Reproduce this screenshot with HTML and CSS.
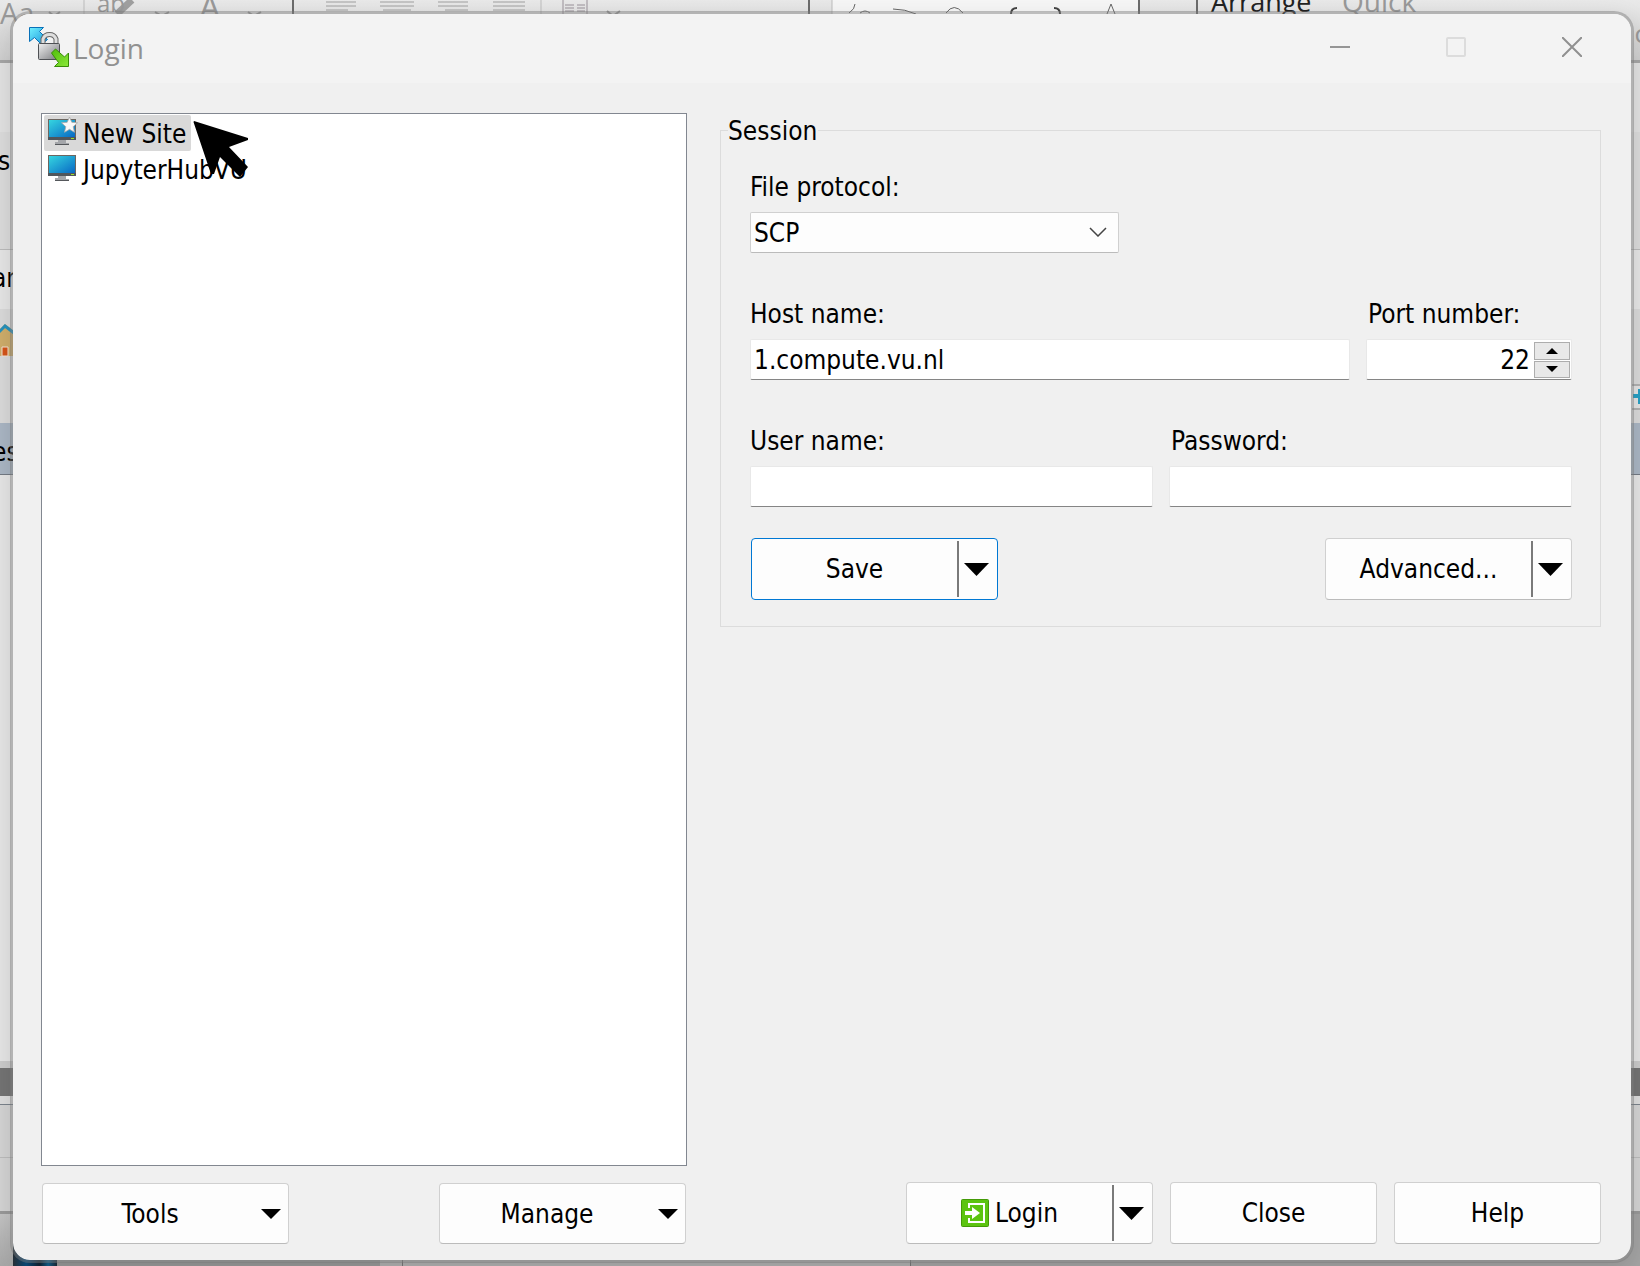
FILE: index.html
```html
<!DOCTYPE html>
<html lang="en">
<head>
<meta charset="utf-8">
<title>Login</title>
<link rel="stylesheet" href="styles.css">
</head>
<body>
<svg class="defs" width="0" height="0" aria-hidden="true">
  <defs>
    <linearGradient id="screen" x1="0" y1="0" x2="1" y2="1">
      <stop offset="0" stop-color="#35d5e0"/><stop offset="1" stop-color="#0868c4"/>
    </linearGradient>
    <linearGradient id="metal" x1="0" y1="0" x2="1" y2="1">
      <stop offset="0" stop-color="#f0f0f0"/><stop offset="1" stop-color="#77787c"/>
    </linearGradient>
    <linearGradient id="sky" x1="0" y1="0" x2="1" y2="1">
      <stop offset="0" stop-color="#6ff0ff"/><stop offset="1" stop-color="#1892d8"/>
    </linearGradient>
    <linearGradient id="leaf" x1="0" y1="0" x2="1" y2="1">
      <stop offset="0" stop-color="#4fbd0a"/><stop offset="1" stop-color="#8be83a"/>
    </linearGradient>
    <symbol id="monitor" viewBox="0 0 28 28">
      <path d="M10 22h8v3h3v2H7v-3h3z" fill="#a4a6aa"/>
      <path d="M7 26h14v1H7z" fill="#55585c"/>
      <path d="M0 1h28v21H0z" fill="#6c6660"/>
      <path d="M1 2h26v17H1z" fill="url(#screen)"/>
      <path d="M0 19h28v3H0z" fill="#50565c"/>
      <path d="M23 20h3v1h-3z" fill="#9be02c"/>
    </symbol>
  </defs>
</svg>

<div class="desktop">
  <div class="backdrop" aria-hidden="true">
    <div class="band ribbon">
      <svg width="1640" height="60" viewBox="0 0 1640 60">
        <path d="M832 0h306v20H832z" fill="#f6f6f6"/>
        <g fill="none" stroke="#8a8a8a">
          <path d="M84 0v20M541 0v20M832 0v20" stroke="#bdbdbd"/>
          <path d="M293 0v20M809 0v20M1139 0v20M1197 0v20" stroke="#6c6c6c" stroke-width="2"/>
          <path d="M326 2h30M326 10h22M326 6h30M380 2h34M383 10h28M380 6h34M438 2h30M445 10h23M438 6h30M493 2h32M493 6h32M493 10h32" stroke="#a0a0a0"/>
          <path d="M563 0v20M587 0v20M565 5h9M577 5h8M565 8h9M577 8h8M565 11h9M577 11h8" stroke="#9a929a"/>
          <path d="M49 12l5 4 6-4M155 12l7 4 7-4M248 12l6 4 7-4M607 11l6 5 7-5" stroke="#999" stroke-width="2"/>
          <path d="M117 14l15-14" stroke="#a0a0a0" stroke-width="7"/>
          <path d="M855 4q0 5-6 9M860 13q5-4 10 0M893 9q12 0 23 5M946 13q8-11 17 0M1107 14l4-10 4 10" stroke="#666"/>
          <path d="M1017 8q-6 0-6 6M1054 8q6 0 6 6" stroke="#444" stroke-width="2"/>
        </g>
        <g class="ribbon-text">
          <text x="0" y="24" font-size="29">Aa</text>
          <text x="97" y="12" font-size="24">ab</text>
          <text x="199" y="20" font-size="34">A</text>
          <text class="dark" x="1211" y="12" font-size="27">Arrange</text>
          <text x="1342" y="12" font-size="28">Quick</text>
        </g>
      </svg>
      <span class="edge-letter">c</span>
    </div>
    <div class="band ribbon-rule"></div>
    <div class="band b-light"></div>
    <div class="band b-tools"><span class="cut cut-s">s</span></div>
    <div class="band b-path"><span class="cut">ar</span></div>
    <div class="band b-icons">
      <svg width="14" height="46" viewBox="0 0 14 46">
        <path d="M0 18l5-5 9 7v25H0z" fill="#cfae6b"/>
        <path d="M-2 22L5 15l9 7" fill="none" stroke="#2792bd" stroke-width="3"/>
        <path d="M2 36h6v9H2z" fill="#d65418" stroke="#f4e4d4"/>
      </svg>
    </div>
    <div class="band b-row"><svg width="8" height="26" viewBox="0 0 8 26"><path d="M0 1h8M0 25h8" stroke="#888"/><path d="M0 2h8v22H0z" fill="#e4e4e4"/><path d="M1 12h7" stroke="#28a0c4" stroke-width="4"/><path d="M7 5v15" stroke="#28a0c4" stroke-width="2"/></svg></div>
    <div class="band b-selected"><span class="cut">es</span></div>
    <div class="band b-pane"></div>
    <div class="band b-trim"></div>
    <div class="band b-dark"></div>
    <div class="band b-gap"></div>
    <div class="band b-status"></div>
    <div class="band b-status"></div>
    <div class="band b-desk">
      <div class="thumb"></div><div class="strip"></div><div class="strip-light"></div><div class="strip-wide"></div><div class="strip-end"></div>
    </div>
  </div>

  <main class="window">
    <header class="titlebar">
      <svg class="app-icon" viewBox="0 0 40 40" aria-hidden="true">
        <path d="M.5 .5h14l-4 4 8 8-6 5-7-7-5 4z" fill="url(#sky)" stroke="#0870b8"/>
        <path d="M14 18v-6a7 7 0 0 1 13 0v6" fill="none" stroke="#686868" stroke-width="5"/>
        <path d="M14 18v-6a7 7 0 0 1 13 0v6" fill="none" stroke="#dedede" stroke-width="3"/>
        <rect x="9.500" y="16.500" width="21" height="16" rx="1" fill="url(#metal)" stroke="#4e5054"/>
        <path d="M22.500 26l4-4 9 8 4-4v13.500h-14l4-4z" fill="url(#leaf)" stroke="#388c08"/>
      </svg>
      <h1 class="title">Login</h1>
      <div class="controls">
        <button class="control" type="button" aria-label="Minimize"><svg width="20" height="20" viewBox="0 0 20 20"><path d="M0 10h20" stroke="#959595" stroke-width="2"/></svg></button>
        <button class="control" type="button" aria-label="Maximize" disabled><svg width="20" height="20" viewBox="0 0 20 20"><rect x="1" y="1" width="18" height="18" rx="1" fill="none" stroke="#dcdcdc" stroke-width="2"/></svg></button>
        <button class="control" type="button" aria-label="Close window"><svg width="20" height="20" viewBox="0 0 20 20"><path d="M0 0l20 20M20 0L0 20" stroke="#909090" stroke-width="2"/></svg></button>
      </div>
    </header>

    <div class="content">
      <section class="column">
        <ul class="sites">
          <li class="site selected">
            <svg class="site-icon" viewBox="0 0 28 28" aria-hidden="true"><use href="#monitor"/><path d="M21.500-1l2.300 5.300 5.700.5-4.300 3.900 1.300 5.600-5-3-5 3 1.300-5.600-4.300-3.900 5.700-.5z" fill="#f8f8f8" stroke="#a8a8a8" stroke-width=".8"/></svg>
            <span>New Site</span>
          </li>
          <li class="site">
            <svg class="site-icon" viewBox="0 0 28 28" aria-hidden="true"><use href="#monitor"/></svg>
            <span>JupyterHubVU</span>
          </li>
        </ul>
        <div class="actions spread">
          <button class="button menu" type="button"><span class="caption">Tools</span><svg width="20" height="10" viewBox="0 0 20 10" aria-hidden="true"><path d="M0 0h20L10 10z"/></svg></button>
          <button class="button menu" type="button"><span class="caption">Manage</span><svg width="20" height="10" viewBox="0 0 20 10" aria-hidden="true"><path d="M0 0h20L10 10z"/></svg></button>
        </div>
      </section>

      <form class="column" onsubmit="return false">
        <fieldset class="session">
          <legend>Session</legend>
          <div class="rows">
            <div class="field protocol">
              <label for="protocol">File protocol:</label>
              <div class="select-box">
                <select id="protocol"><option>SCP</option></select>
                <svg class="chevron" width="18" height="10" viewBox="0 0 18 10" aria-hidden="true"><path d="M1 1l8 8 8-8" fill="none" stroke="#444" stroke-width="1.500"/></svg>
              </div>
            </div>
            <div class="pair">
              <div class="field grow">
                <label for="host">Host name:</label>
                <input id="host" class="box" type="text" value="1.compute.vu.nl">
              </div>
              <div class="field port">
                <label class="inset" for="port">Port number:</label>
                <div class="box spinner">
                  <input id="port" type="number" value="22">
                  <div class="steps">
                    <button class="step" type="button" aria-label="Increase"><svg width="12" height="6" viewBox="0 0 12 6"><path d="M0 6h12L6 0z"/></svg></button>
                    <button class="step" type="button" aria-label="Decrease"><svg width="12" height="6" viewBox="0 0 12 6"><path d="M0 0h12L6 6z"/></svg></button>
                  </div>
                </div>
              </div>
            </div>
            <div class="pair">
              <div class="field grow">
                <label for="user">User name:</label>
                <input id="user" class="box" type="text">
              </div>
              <div class="field grow">
                <label class="inset" for="password">Password:</label>
                <input id="password" class="box" type="password">
              </div>
            </div>
          </div>
          <div class="session-actions">
            <div class="button split primary">
              <button class="part" type="button">Save</button>
              <button class="part drop" type="button" aria-label="Save options"><svg width="25" height="13" viewBox="0 0 25 13"><path d="M0 0h25L12.500 13z"/></svg></button>
            </div>
            <div class="button split">
              <button class="part" type="button">Advanced...</button>
              <button class="part drop" type="button" aria-label="Advanced options"><svg width="25" height="13" viewBox="0 0 25 13"><path d="M0 0h25L12.500 13z"/></svg></button>
            </div>
          </div>
        </fieldset>
        <div class="actions end">
          <div class="button split">
            <button class="part" type="submit">
              <svg width="28" height="28" viewBox="0 0 28 28" aria-hidden="true"><rect x=".5" y=".5" width="27" height="27" rx="1" fill="#5cc410" stroke="#449a08"/><path d="M8 9V5h15v18H8v-4" fill="none" stroke="#fff" stroke-width="2"/><path d="M4 12h7V8l8 6-8 6v-4H4z" fill="#fff"/></svg>
              <span>Login</span>
            </button>
            <button class="part drop" type="button" aria-label="Login options"><svg width="25" height="13" viewBox="0 0 25 13"><path d="M0 0h25L12.500 13z"/></svg></button>
          </div>
          <button class="button plain" type="button">Close</button>
          <button class="button plain" type="button">Help</button>
        </div>
      </form>
    </div>
  </main>

  <svg class="pointer" width="57" height="60" viewBox="0 0 57 60" aria-hidden="true"><path d="M1 1L55 18v2L36 27l19 20-8 10-20-20-6 17h-3L.5 2z"/></svg>
</div>
</body>
</html>
```
FILE: styles.css
```css
* { box-sizing: border-box; }

body {
  margin: 0;
  font: 26px/32px "DejaVu Sans Condensed", "Noto Sans", sans-serif;
  color: #000;
}

button, input, select { font: inherit; color: inherit; margin: 0; }
svg { display: block; flex: none; }
.defs { position: absolute; }

/* Desktop and what shows behind the dialog */
.desktop {
  position: relative;
  display: flex;
  min-height: 100vh;
  padding: 11px 6px 3px 10px;
  overflow: hidden;
}

.backdrop {
  position: absolute;
  inset: 0;
  display: flex;
  flex-direction: column;
  background: #e6e6e6;
}

.band { flex: none; display: flex; justify-content: flex-start; overflow: hidden; }
.ribbon { position: relative; height: 60px; background: linear-gradient(#e9e9e9, #cfcfcf); }
.ribbon-text { font-family: "Open Sans", sans-serif; fill: #999; }
.ribbon-text .dark { fill: #222; }
.edge-letter { position: absolute; right: -7px; top: 17px; font-family: "Open Sans", sans-serif; color: #999; }
.ribbon-rule { height: 3px; background: #a6a6a6; }
.b-light { height: 69px; background: #e2e2e2; }
.b-tools { height: 118px; background: #dcdcdc; border-bottom: 1px solid #bbb; }
.b-path { height: 59px; padding-top: 12px; background: #e6e6e6; }
.b-icons { height: 63px; padding-top: 2px; background: #dadada; }
.b-row { height: 51px; padding-top: 12px; background: #dadada; justify-content: flex-end; }
.b-selected { height: 52px; padding-top: 13px; background: #aab6c4; border-bottom: 1px solid #737a84; }
.b-pane { flex: 1; background: #e6e6e6; }
.b-trim { height: 7px; background: #cbcbcb; }
.b-dark { height: 28px; background: #747474; }
.b-gap { height: 9px; background: #dedede; border-bottom: 1px solid #7b838c; }
.b-status { height: 53px; background: #d4d4d4; border-bottom: 1px solid #bcbcbc; }
.b-status + .b-status { height: 56px; border-bottom: 3px solid #999; }
.b-desk { height: 52px; padding-left: 13px; background: linear-gradient(#c4c4c4, #a8a8a8); }
.cut { width: 14px; margin-left: -6px; white-space: nowrap; }
.b-path .cut, .b-selected .cut { margin-left: -8px; }
.cut-s { margin-left: -2px; padding-top: 13px; }
.thumb { width: 44px; background: linear-gradient(90deg, #283038, #0b4c7c 30%, #123 60%, #14608c 80%, #1a2a38); }
.strip { width: 323px; background: #989898; }
.strip-light { width: 23px; background: #b0b0b0; border-right: 1px solid #777; }
.strip-wide { width: 508px; background: #b0b0b0; border-right: 1px solid #777; }
.strip-end { flex: 1; background: #a4a4a4; }

/* Dialog window */
.window {
  position: relative;
  flex: 1;
  display: flex;
  flex-direction: column;
  background: #f0f0f0;
  background-clip: padding-box;
  border: 3px solid rgba(120, 120, 120, .45);
  border-radius: 20px;
  box-shadow: 0 8px 24px rgba(0, 0, 0, .12);
}

.titlebar {
  display: flex;
  height: 69px;
  padding: 13px 1px 0 16px;
  background: #f3f3f3;
  border-radius: 17px 17px 0 0;
}
.app-icon { width: 40px; height: 40px; }
.title { margin: 3px 0 0 4px; font: 28px/36px "Open Sans", sans-serif; color: #919191; }
.controls { display: flex; height: 40px; margin-left: auto; }
.control {
  display: flex;
  justify-content: center;
  width: 116px;
  padding: 10px 0 0;
  border: 0;
  background: none;
}

.content {
  flex: 1;
  display: grid;
  grid-template-columns: minmax(0, 646fr) minmax(0, 881fr);
  gap: 33px;
  padding: 30px 30px 16px 28px;
}
.column { display: flex; flex-direction: column; gap: 17px; }

/* Site list */
.sites {
  flex: 1;
  margin: 0;
  padding: 1px 2px;
  list-style: none;
  background: #fff;
  border: 1px solid #828790;
}
.site {
  display: flex;
  gap: 7px;
  width: fit-content;
  height: 36px;
  padding: 3px 5px 0 4px;
  border-radius: 2px;
}
.selected { background: #d9d9d9; }
.site-icon { width: 28px; height: 28px; overflow: visible; }

/* Buttons */
.actions { display: flex; gap: 17px; }
.spread { justify-content: space-between; padding: 0 1px; }
.end { justify-content: flex-end; margin-top: auto; }

.button {
  display: flex;
  align-items: center;
  height: 62px;
  background: #fdfdfd;
  border: 1px solid #d0d0d0;
  border-bottom-color: #bbb;
  border-radius: 4px;
}
.menu { width: 247px; height: 61px; padding: 0 7px 0 0; gap: 4px; }
.caption { flex: 1; }
.plain { width: 207px; justify-content: center; }
.split { width: 247px; align-items: stretch; padding: 2px 0; }
.primary { border-color: #0078d4; }
.part {
  flex: 1;
  display: flex;
  align-items: center;
  justify-content: center;
  gap: 6px;
  padding: 0;
  border: 0;
  background: none;
}
.drop { flex: 0 0 40px; padding-right: 3px; border-left: 2px solid #7a7a7a; }

/* Session group */
.session {
  margin: 0;
  padding: 24px 28px 26px 7px;
  border: 1px solid #dcdcdc;
  min-width: 0;
}
legend { padding: 2px 1px 0 0; }
.rows { display: flex; flex-direction: column; gap: 45px; padding-left: 22px; }
.pair { display: flex; gap: 16px; }
.field { display: flex; flex-direction: column; gap: 9px; }
.grow { flex: 1; }
.port { width: 206px; }
.protocol { width: 369px; }
.inset { padding-left: 2px; }

.box, .select-box select {
  width: 100%;
  height: 41px;
  padding: 0 3px;
  background: #fff;
  border: 1px solid #e8e8e8;
  border-bottom-color: #858585;
  border-radius: 2px;
  outline: 0;
}
.select-box { position: relative; }
.select-box select { display: block; appearance: none; background: #fdfdfd; border-color: #d0d0d0; border-bottom-color: #bbb; }
.chevron { position: absolute; right: 12px; top: 15px; pointer-events: none; }

.spinner { display: flex; gap: 4px; padding: 2px 1px 1px 3px; }
.spinner input {
  flex: 1;
  min-width: 0;
  padding: 0;
  border: 0;
  outline: 0;
  background: none;
  text-align: right;
  appearance: textfield;
}
.spinner input::-webkit-inner-spin-button { appearance: none; margin: 0; }
.steps { display: flex; flex-direction: column; gap: 1px; width: 36px; }
.step {
  flex: 1;
  display: flex;
  align-items: center;
  justify-content: center;
  padding: 0;
  background: #e8e8e8;
  border: 1px solid #adadad;
}

.session-actions { display: flex; justify-content: space-between; padding: 31px 0 0 23px; }

.pointer { position: absolute; left: 193px; top: 120px; pointer-events: none; }
```
